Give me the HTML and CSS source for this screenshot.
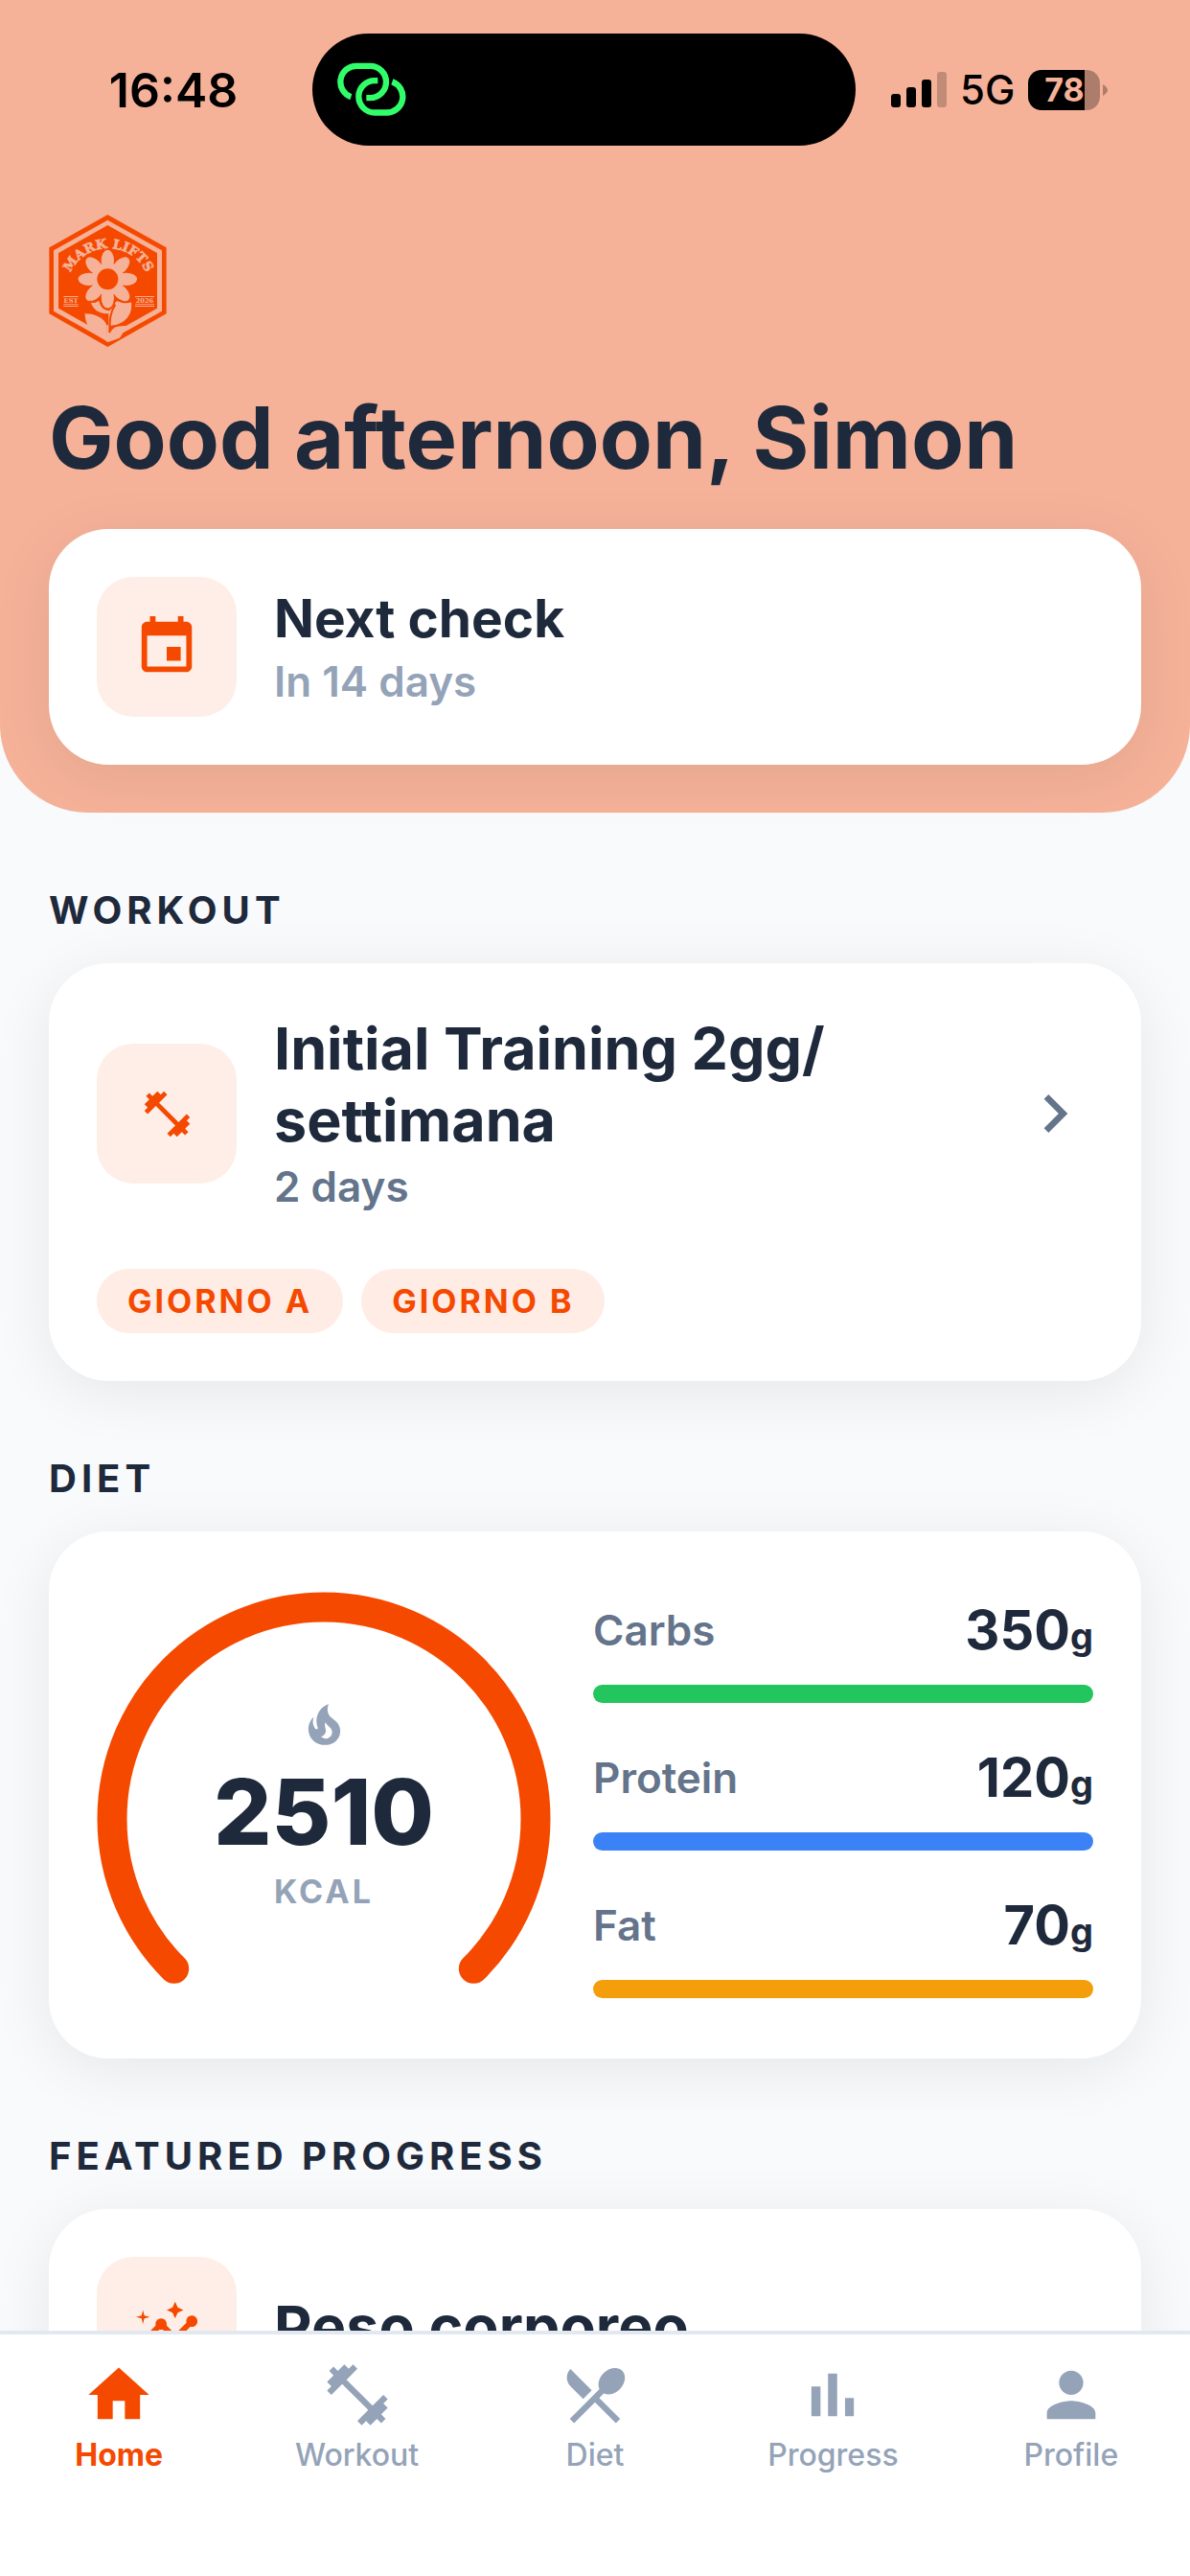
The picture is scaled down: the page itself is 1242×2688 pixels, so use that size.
FILE: index.html
```html
<!DOCTYPE html>
<html lang="en">
<head>
<meta charset="utf-8">
<meta name="viewport" content="width=device-width, initial-scale=1">
<title>Mark Lifts</title>
<link rel="stylesheet" href="styles.css">
</head>
<body>
<div class="app">
  <main class="scroll">
    <header class="hero">
      <div class="status">
        <span class="time">16:48</span>
        <div class="island">
          <svg class="link-icon" viewBox="66 45 216 170" aria-hidden="true">
            <path d="M109 153A50 50 0 0 1 127 56H169A50 50 0 0 1 169 156H157"/>
            <path d="M193 102H183A50 50 0 0 0 183 202H220A50 50 0 0 0 238 105"/>
          </svg>
        </div>
        <div class="indicators">
          <svg class="signal" viewBox="0 0 58 37" aria-hidden="true">
            <rect x="0" y="23" width="10" height="14" rx="3"/>
            <rect x="16" y="16" width="10" height="21" rx="3"/>
            <rect x="32" y="8" width="10" height="29" rx="3"/>
            <rect x="48" y="0" width="10" height="37" rx="3" opacity=".22"/>
          </svg>
          <span class="network">5G</span>
          <div class="battery-wrap">
            <span class="battery">78</span>
            <svg class="battery-tip" viewBox="0 0 5 12" aria-hidden="true"><path d="M0 0Q5 3 5 6T0 12Z"/></svg>
          </div>
        </div>
      </div>

      <div class="hero-body">
        <svg class="logo" viewBox="33 27 367 414" role="img" aria-label="Mark Lifts">
          <defs><path id="arc" d="M88 262A130 130 0 0 1 348 262"/></defs>
          <path class="ink" d="M216 27L400 130V337L216 441L33 337V130Z"/>
          <path class="paper" d="M216 44L386 139V329L216 424L47 329V139Z"/>
          <path class="ink" d="M216 60L371 147V320L216 407L62 320V147Z"/>
          <text class="paper logo-name" text-anchor="middle"><textPath href="#arc" startOffset="50%">MARK LIFTS</textPath></text>
          <g class="paper">
            <path d="M158 300C166 304 180 302 188 292C192 312 200 326 222 328C226 312 232 304 240 300C262 290 280 306 290 300C294 340 276 366 224 378V372L216 340C184 338 164 324 158 300Z"/>
            <path d="M145 334C182 334 206 344 214 366V424C190 406 144 392 145 334Z"/>
            <path d="M222 400C232 378 250 370 275 373C262 384 268 402 252 414L220 425H212L216 330H222Z"/>
            <g>
              <ellipse cx="216" cy="171" rx="20" ry="34"/>
              <ellipse cx="216" cy="171" rx="20" ry="34" transform="rotate(45 216 229)"/>
              <ellipse cx="216" cy="171" rx="20" ry="34" transform="rotate(90 216 229)"/>
              <ellipse cx="216" cy="171" rx="20" ry="34" transform="rotate(135 216 229)"/>
              <ellipse cx="216" cy="171" rx="20" ry="34" transform="rotate(180 216 229)"/>
              <ellipse cx="216" cy="171" rx="20" ry="34" transform="rotate(225 216 229)"/>
              <ellipse cx="216" cy="171" rx="20" ry="34" transform="rotate(270 216 229)"/>
              <ellipse cx="216" cy="171" rx="20" ry="34" transform="rotate(315 216 229)"/>
              <circle cx="216" cy="229" r="50"/>
            </g>
          </g>
          <g class="vein">
            <path d="M160 298C178 304 186 296 191 288C196 312 202 322 216 323C230 322 238 310 240 288C250 300 272 304 290 298"/>
            <path d="M160 300C168 328 188 340 216 340V372C208 350 180 334 146 334"/>
            <path d="M222 396C222 350 226 330 240 308M222 378C232 376 246 372 275 371"/>
          </g>
          <circle class="ink" cx="216" cy="229" r="33"/>
          <path class="paper" d="M78 282h46v3H78zM78 307h46v2H78zM78 312h46v3H78zM302 282h60v3h-60zM302 307h60v2h-60zM302 312h60v3h-60z"/>
          <text class="paper logo-small" x="101" y="303" text-anchor="middle">EST</text>
          <text class="paper logo-small" x="332" y="303" text-anchor="middle">2026</text>
        </svg>
        <h1 class="greeting">Good afternoon, Simon</h1>
        <section class="card row">
          <span class="tile"><svg class="icon-md" viewBox="0 0 24 24" aria-hidden="true"><path d="M17 12h-5v5h5v-5zM16 1v2H8V1H6v2H5c-1.11 0-1.99.9-1.99 2L3 19c0 1.1.89 2 2 2h14c1.1 0 2-.9 2-2V5c0-1.1-.9-2-2-2h-1V1h-2zm3 18H5V8h14v11z"/></svg></span>
          <div class="row-text">
            <h2 class="title title-sm">Next check</h2>
            <p class="sub sub-light">In 14 days</p>
          </div>
        </section>
      </div>
    </header>

    <div class="content">
      <h2 class="section-title">WORKOUT</h2>
      <section class="card">
        <a class="row workout" href="#workout">
          <span class="tile"><svg class="icon-sm" viewBox="0 0 24 24" aria-hidden="true"><path d="M20.57 14.86L22 13.43 20.57 12 17 15.57 8.43 7 12 3.43 10.57 2 9.14 3.43 7.71 2 5.57 4.14 4.14 2.71 2.71 4.14l1.43 1.43L2 7.71l1.43 1.43L2 10.57 3.43 12 7 8.43 15.57 17 12 20.57 13.43 22l1.43-1.43L16.29 22l2.14-2.14 1.43 1.43 1.43-1.43-1.43-1.43L22 16.29z"/></svg></span>
          <span class="row-text">
            <span class="title">Initial Training 2gg/<wbr>settimana</span>
            <span class="sub">2 days</span>
          </span>
          <svg class="chevron" viewBox="0 0 24 24" aria-hidden="true"><path d="M10 6L8.59 7.41 13.17 12l-4.58 4.59L10 18l6-6z"/></svg>
        </a>
        <div class="chips">
          <span class="chip">GIORNO A</span>
          <span class="chip">GIORNO B</span>
        </div>
      </section>

      <h2 class="section-title">DIET</h2>
      <section class="card diet">
        <div class="gauge">
          <svg class="gauge-ring" viewBox="0 0 474 409" aria-hidden="true"><path d="M80.7 393.3A221 221 0 1 1 393.3 393.3"/></svg>
          <div class="gauge-label">
            <svg class="icon-sm" viewBox="0 0 24 24" aria-hidden="true"><path d="M17.66 11.2C17.43 10.9 17.15 10.64 16.89 10.38C16.22 9.78 15.46 9.35 14.82 8.72C13.33 7.26 13 4.85 13.95 3C13 3.23 12.17 3.75 11.46 4.32C8.87 6.4 7.85 10.07 9.07 13.22C9.11 13.32 9.15 13.42 9.15 13.55C9.15 13.77 9 13.97 8.8 14.05C8.57 14.15 8.33 14.09 8.14 13.93C8.08 13.88 8.04 13.83 8 13.76C6.87 12.33 6.69 10.28 7.45 8.64C5.78 10 4.87 12.3 5 14.47C5.06 14.97 5.12 15.47 5.29 15.97C5.43 16.57 5.7 17.17 6 17.7C7.08 19.43 8.95 20.67 10.96 20.92C13.1 21.19 15.39 20.8 17.03 19.32C18.86 17.66 19.5 15 18.56 12.72L18.43 12.46C18.22 12 17.66 11.2 17.66 11.2M14.5 17.5C14.22 17.74 13.76 18 13.4 18.1C12.28 18.5 11.16 17.94 10.5 17.28C11.69 17 12.4 16.12 12.61 15.23C12.78 14.43 12.46 13.77 12.33 13C12.21 12.26 12.23 11.63 12.5 10.94C12.69 11.32 12.89 11.7 13.13 12C13.9 13 15.11 13.44 15.37 14.8C15.41 14.94 15.43 15.08 15.43 15.23C15.46 16.05 15.1 16.95 14.5 17.5Z"/></svg>
            <span class="kcal">2510</span>
            <span class="kcal-unit">KCAL</span>
          </div>
        </div>
        <ul class="macros">
          <li>
            <div class="macro-head"><span class="macro-name">Carbs</span><span class="macro-value">350<small>g</small></span></div>
            <div class="bar carbs"></div>
          </li>
          <li>
            <div class="macro-head"><span class="macro-name">Protein</span><span class="macro-value">120<small>g</small></span></div>
            <div class="bar protein"></div>
          </li>
          <li>
            <div class="macro-head"><span class="macro-name">Fat</span><span class="macro-value">70<small>g</small></span></div>
            <div class="bar fat"></div>
          </li>
        </ul>
      </section>

      <h2 class="section-title">FEATURED PROGRESS</h2>
      <section class="card row">
        <span class="tile"><svg class="icon-md" viewBox="0 0 24 24" aria-hidden="true"><path d="M21 8c-1.45 0-2.26 1.44-1.93 2.51l-3.55 3.56c-.3-.09-.74-.09-1.04 0l-2.55-2.55C12.27 10.45 11.46 9 10 9c-1.45 0-2.27 1.44-1.93 2.52l-4.56 4.55C2.44 15.74 1 16.55 1 18c0 1.1.9 2 2 2 1.45 0 2.26-1.44 1.93-2.51l4.55-4.56c.3.09.74.09 1.04 0l2.55 2.55C12.73 16.55 13.54 18 15 18c1.45 0 2.27-1.44 1.93-2.52l3.56-3.55c1.07.33 2.51-.48 2.51-1.93 0-1.1-.9-2-2-2z"/><path d="M15 9l.94-2.07L18 6l-2.06-.93L15 3l-.92 2.07L12 6l2.08.93zM3.5 11L4 9l2-.5L4 8l-.5-2L3 8l-2 .5L3 9z"/></svg></span>
        <div class="row-text"><h3 class="title">Peso corporeo</h3></div>
      </section>
    </div>
  </main>

  <nav class="tabs" aria-label="Main">
    <a class="tab active" href="#home" aria-current="page"><svg viewBox="0 0 24 24" aria-hidden="true"><path d="M10 20v-6h4v6h5v-8h3L12 3 2 12h3v8z"/></svg>Home</a>
    <a class="tab" href="#workout"><svg viewBox="0 0 24 24" aria-hidden="true"><path d="M20.57 14.86L22 13.43 20.57 12 17 15.57 8.43 7 12 3.43 10.57 2 9.14 3.43 7.71 2 5.57 4.14 4.14 2.71 2.71 4.14l1.43 1.43L2 7.71l1.43 1.43L2 10.57 3.43 12 7 8.43 15.57 17 12 20.57 13.43 22l1.43-1.43L16.29 22l2.14-2.14 1.43 1.43 1.43-1.43-1.43-1.43L22 16.29z"/></svg>Workout</a>
    <a class="tab" href="#diet"><svg viewBox="0 0 24 24" aria-hidden="true"><path d="M8.1 13.34l2.83-2.83L3.91 3.5c-1.56 1.56-1.56 4.09 0 5.66l4.19 4.18zm6.78-1.81c1.53.71 3.68.21 5.27-1.38 1.91-1.91 2.28-4.65.81-6.12-1.46-1.46-4.2-1.1-6.12.81-1.59 1.59-2.09 3.74-1.38 5.27L3.7 19.87l1.41 1.41L12 14.41l6.88 6.88 1.41-1.41L13.41 13l1.47-1.47z"/></svg>Diet</a>
    <a class="tab" href="#progress"><svg viewBox="0 0 24 24" aria-hidden="true"><path d="M5 9.2h3V19H5zM10.5 5h3v14h-3zM16.1 13H19v6h-2.9z"/></svg>Progress</a>
    <a class="tab" href="#profile"><svg viewBox="0 0 24 24" aria-hidden="true"><path d="M12 12c2.21 0 4-1.79 4-4s-1.79-4-4-4-4 1.79-4 4 1.79 4 4 4zm0 2c-2.67 0-8 1.34-8 4v2h16v-2c0-2.66-5.33-4-8-4z"/></svg>Profile</a>
  </nav>
</div>
</body>
</html>
```
FILE: styles.css
```css
:root {
  --orange: #f54900;
  --peach: #f6b299;
  --tile: #feeee7;
  --ink: #1e293b;
  --slate: #64748b;
  --mist: #94a3b8;
}

* { box-sizing: border-box; }

body {
  margin: 0;
  background: #f8fafc;
  color: var(--ink);
  font-family: Inter, "Liberation Sans", sans-serif;
}

h1, h2, h3, p, ul { margin: 0; padding: 0; }
a { color: inherit; text-decoration: none; }
svg { display: block; fill: currentColor; flex: none; }

.app {
  display: flex;
  flex-direction: column;
  height: 100vh;
}

.scroll {
  flex: 1;
  min-height: 0;
  overflow-y: auto;
  scrollbar-width: none;
}

/* Header */
.hero {
  background: var(--peach);
  border-radius: 0 0 92px 92px;
  padding: 35px 0 50px;
}

.status {
  display: grid;
  grid-template-columns: 326px 1fr 349px;
  align-items: center;
  color: #000;
}

.time {
  padding-left: 36px;
  text-align: center;
  font-size: 50px;
  font-weight: 600;
  line-height: 60px;
}

.island {
  display: flex;
  align-items: center;
  height: 117px;
  padding-left: 26px;
  border-radius: 59px;
  background: #000;
}

.link-icon {
  width: 72px;
  height: 57px;
  fill: none;
  stroke: #30ff6a;
  stroke-width: 19;
}

.indicators {
  display: flex;
  align-items: center;
  gap: 14px;
  padding-left: 37px;
}

.signal { width: 58px; height: 37px; }

.network {
  font-size: 42px;
  font-weight: 500;
  line-height: 50px;
}

.battery-wrap {
  display: flex;
  align-items: center;
  gap: 3px;
}

.battery {
  width: 75px;
  height: 42px;
  border-radius: 14px;
  background: linear-gradient(90deg, #000 59px, #ad7d6b 59px);
  color: var(--peach);
  font-size: 34px;
  font-weight: 700;
  line-height: 42px;
  text-align: center;
}

.battery-tip { width: 5px; height: 12px; color: #ad7d6b; }

.hero-body { padding: 72px 51px 0; }

.logo { width: 123px; height: 138px; }
.logo .ink { fill: var(--orange); }
.logo .paper { fill: var(--peach); }
.logo .vein { fill: none; stroke: var(--orange); stroke-width: 6; }
.logo-name { font: 700 41px "DejaVu Serif", serif; stroke: var(--peach); stroke-width: 2; }
.logo-small { font: 700 20px "DejaVu Serif", serif; }

.greeting {
  margin: 40px 0;
  font-size: 90px;
  font-weight: 700;
  line-height: 110px;
}

/* Cards */
.card {
  padding: 50px;
  border-radius: 62px;
  background: #fff;
  box-shadow: 0 12px 64px rgba(0, 0, 0, .08);
}

.row {
  display: flex;
  align-items: center;
  gap: 39px;
}

.tile {
  display: grid;
  place-items: center;
  flex: none;
  width: 146px;
  height: 146px;
  border-radius: 38px;
  background: var(--tile);
  color: var(--orange);
}

.icon-md { width: 70px; height: 70px; }
.icon-sm { width: 57px; height: 57px; }

.row-text {
  display: flex;
  flex: 1;
  flex-direction: column;
  gap: 2px;
}

.title {
  font-size: 61px;
  font-weight: 700;
  line-height: 75px;
}

.title-sm {
  font-size: 55px;
  line-height: 70px;
}

.sub {
  color: var(--slate);
  font-size: 44px;
  font-weight: 600;
  line-height: 58px;
}

.sub-light { color: var(--mist); }

/* Sections */
.content { padding: 0 51px 51px; }

.section-title {
  margin: 77px 0 30px;
  font-size: 40px;
  font-weight: 700;
  line-height: 50px;
  letter-spacing: 5px;
}

.workout { padding: 2px 0; }
.chevron { width: 80px; height: 80px; color: var(--slate); }

.chips {
  display: flex;
  flex-wrap: wrap;
  gap: 19px;
  margin-top: 55px;
}

.chip {
  padding: 0 32px;
  border-radius: 34px;
  background: #ffece5;
  color: var(--orange);
  font-size: 34px;
  font-weight: 700;
  line-height: 67px;
  letter-spacing: 3px;
}

/* Diet */
.diet {
  display: flex;
  gap: 44px;
  padding: 63px 50px;
}

.gauge {
  display: grid;
  flex: none;
  align-items: start;
}

.gauge-ring, .gauge-label { grid-area: 1 / 1; }

.gauge-ring {
  width: 474px;
  height: 409px;
  fill: none;
  stroke: var(--orange);
  stroke-width: 31;
  stroke-linecap: round;
}

.gauge-label {
  display: flex;
  flex-direction: column;
  align-items: center;
  padding-top: 110px;
  color: var(--mist);
}

.kcal {
  margin: 8px 0;
  color: var(--ink);
  font-size: 95px;
  font-weight: 800;
  line-height: 110px;
}

.kcal-unit {
  font-size: 34px;
  font-weight: 700;
  line-height: 40px;
  letter-spacing: 3px;
}

.macros {
  display: flex;
  flex: 1;
  flex-direction: column;
  gap: 38px;
  list-style: none;
}

.macro-head {
  display: flex;
  align-items: center;
  justify-content: space-between;
  height: 80px;
  margin-bottom: 17px;
}

.macro-name {
  color: var(--slate);
  font-size: 44px;
  font-weight: 600;
}

.macro-value { font-size: 56px; font-weight: 700; }
.macro-value small { font-size: 38px; }

.bar { height: 19px; border-radius: 10px; }
.carbs { background: #22c55e; }
.protein { background: #3b82f6; }
.fat { background: #f59e0b; }

/* Bottom navigation */
.tabs {
  display: grid;
  flex: none;
  grid-template-columns: repeat(5, 1fr);
  padding: 25px 0 106px;
  border-top: 4px solid #e2e8f0;
  background: #fff;
}

.tab {
  display: flex;
  flex-direction: column;
  align-items: center;
  gap: 5px;
  color: var(--mist);
  font-size: 32px;
  font-weight: 500;
  line-height: 40px;
}

.tab svg { width: 76px; height: 76px; }
.active { color: var(--orange); font-weight: 700; }
```
